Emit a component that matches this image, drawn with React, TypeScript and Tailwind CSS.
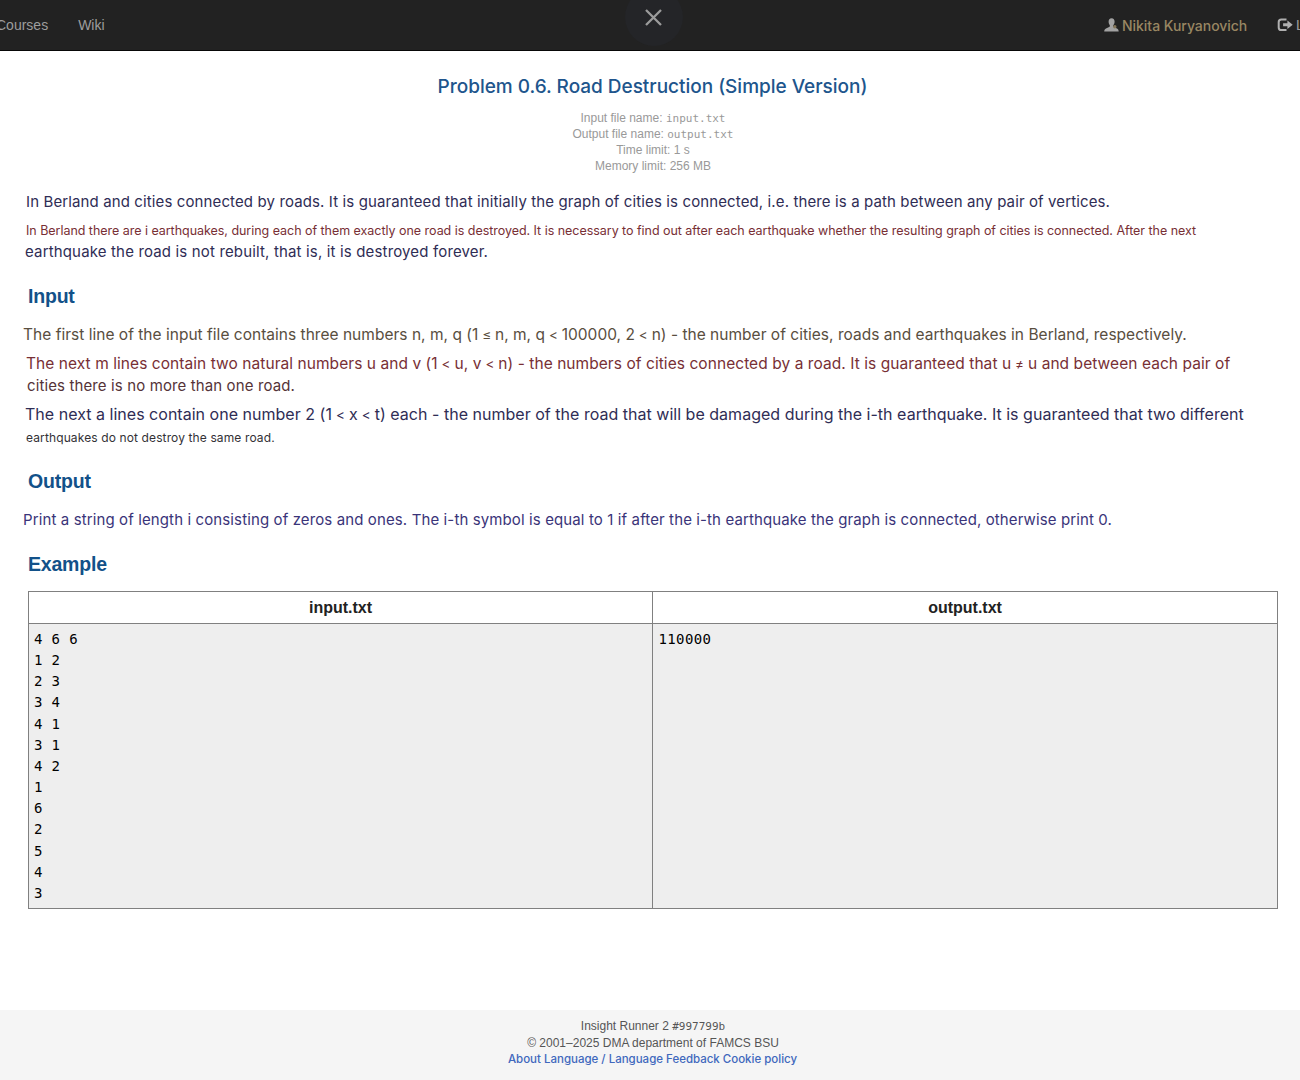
import type { ReactNode } from "react";

const inputLines = ["4 6 6", "1 2", "2 3", "3 4", "4 1", "3 1", "4 2", "1", "6", "2", "5", "4", "3"];

function Line({ className, children }: { className: string; children: ReactNode }) {
  return <p className={`h-[22px] leading-[22px] whitespace-nowrap font-['Inter',sans-serif] ${className}`}>{children}</p>;
}

function Heading({ className, children }: { className: string; children: ReactNode }) {
  return <h2 className={`h-6 pl-[28px] text-[19.5px] leading-6 font-bold tracking-[-0.2px] text-[#125189] ${className}`}>{children}</h2>;
}

function Op({ children }: { children: ReactNode }) {
  return <span className="-mx-[0.5px] text-[13.5px] leading-none">{children}</span>;
}

function UserIcon() {
  return (
    <svg className="-mt-px mr-[3px] h-[14px] w-[15px] shrink-0" viewBox="0 0 15 14">
      <path
        fill="#a2a2a2"
        d="M7.6.2C5.6.2 4.5 1.700 4.600 3.800c0 1.500.6 2.700 1.200 3.400.2.9 0 1.500-.7 1.900L2 10.500c-1 .5-1.600 1.300-1.800 2.900h14.500c-.2-1.600-.7-2.400-1.700-2.900L10 9.100c-.8-.4-.9-1-.7-1.900.7-.8 1.300-1.900 1.300-3.400C10.700 1.700 9.600.2 7.600.2Z"
      />
      <circle cx="10.800" cy="8.800" r="1.700" fill="#85775a" />
    </svg>
  );
}

function LogoutIcon() {
  return (
    <svg className="-mt-px h-[14px] w-4 shrink-0" viewBox="0 0 16 14">
      <path d="M9.500 1.500H4.300A2.600 2.600 0 0 0 1.700 4.100v5.300A2.600 2.600 0 0 0 4.300 12h5.200" fill="none" stroke="#b0b0b0" strokeWidth="2" />
      <path d="M6.100 5.300h4.300V2.500l5.300 4.300-5.300 4.300V8.300H6.100Z" fill="#b0b0b0" />
    </svg>
  );
}

export default function App() {
  return (
    <div className="flex h-[1080px] w-[1300px] flex-col overflow-hidden bg-white font-['Liberation_Sans',Arial,sans-serif]">
      <header className="relative flex h-[51px] shrink-0 items-center justify-between overflow-hidden border-b border-[#080808] bg-[#222222] text-[14px] text-[#9d9d9d]">
        <nav className="flex gap-[30px]">
          <span className="-ml-[4px]">Courses</span>
          <span>Wiki</span>
        </nav>
        <div className="absolute -top-[12px] left-[625px] flex size-[58px] items-center justify-center rounded-full bg-[#242528]">
          <svg className="size-[18px]" viewBox="0 0 18 18">
            <path d="M1 2l15 15M16 2l-15 15" stroke="#9b9b9b" strokeWidth="2.300" />
          </svg>
        </div>
        <div className="flex w-[196px] shrink-0 items-center whitespace-nowrap">
          <UserIcon />
          <span className="w-[155px] shrink-0 pt-[2px] font-['Inter',sans-serif] text-[14px] leading-5 font-medium tracking-[-0.03px] text-[#998762]">
            Nikita Kuryanovich
          </span>
          <LogoutIcon />
          <span className="ml-[3px]">Logout</span>
        </div>
      </header>

      <main className="flex grow flex-col">
        <h1 className="mt-[21px] h-[30px] pl-[5px] text-center font-['Inter',sans-serif] text-[19px] leading-[30px] font-medium tracking-[-0.02px] text-[#20558c]">
          Problem 0.6. Road Destruction (Simple Version)
        </h1>
        <div className="mt-[8px] pl-[6px] text-center text-[12px] leading-4 text-[#999999]">
          <div>
            Input file name: <code className="font-['DejaVu_Sans_Mono',monospace] text-[11px] leading-none">input.txt</code>
          </div>
          <div>
            Output file name: <code className="font-['DejaVu_Sans_Mono',monospace] text-[11px] leading-none">output.txt</code>
          </div>
          <div>Time limit: 1 s</div>
          <div>Memory limit: 256 MB</div>
        </div>

        <Line className="mt-[17px] pl-[26px] text-[15px] tracking-[0.119px] text-[#2f2d55]">
          In Berland and cities connected by roads. It is guaranteed that initially the graph of cities is connected, i.e. there is a path between any pair of vertices.
        </Line>
        <Line className="mt-[7px] pl-[26px] text-[12.5px] tracking-[-0.034px] text-[#782f35]">
          In Berland there are i earthquakes, during each of them exactly one road is destroyed. It is necessary to find out after each earthquake whether the resulting graph of cities is connected. After the next
        </Line>
        <Line className="-mt-px pl-[25px] text-[15px] tracking-[0.157px] text-[#2f2d55]">
          earthquake the road is not rebuilt, that is, it is destroyed forever.
        </Line>

        <Heading className="mt-[21px]">Input</Heading>
        <Line className="mt-[16px] pl-[23px] text-[15.5px] tracking-[0.018px] text-[#594e40]">
          The first line of the input file contains three numbers n, m, q (1 <Op>≤</Op> n, m, q <Op>&lt;</Op> 100000, 2 <Op>&lt;</Op> n) - the number of cities, roads and earthquakes in Berland, respectively.
        </Line>
        <Line className="mt-[7px] pl-[26px] text-[15.5px] tracking-[0.060px] text-[#782f35]">
          The next m lines contain two natural numbers u and v (1 <Op>&lt;</Op> u, v <Op>&lt;</Op> n) - the numbers of cities connected by a road. It is guaranteed that u <Op>≠</Op> u and between each pair of
        </Line>
        <Line className="pl-[27px] text-[15px] tracking-[0.12px] text-[#553338]">
          cities there is no more than one road.
        </Line>
        <Line className="mt-[6px] pl-[25px] text-[16px] tracking-[0.020px] text-[#2f2d55]">
          The next a lines contain one number 2 (1 <Op>&lt;</Op> x <Op>&lt;</Op> t) each - the number of the road that will be damaged during the i-th earthquake. It is guaranteed that two different
        </Line>
        <Line className="mt-[2px] pl-[26px] text-[12px] tracking-[0.12px] text-[#333136]">
          earthquakes do not destroy the same road.
        </Line>

        <Heading className="mt-[20px]">Output</Heading>
        <Line className="mt-[16px] pl-[23px] text-[15px] tracking-[0.117px] text-[#3a3479]">
          Print a string of length i consisting of zeros and ones. The i-th symbol is equal to 1 if after the i-th earthquake the graph is connected, otherwise print 0.
        </Line>

        <Heading className="mt-[21px]">Example</Heading>
        <div className="mt-[15px] ml-[28px] grid h-[318px] w-[1250px] grid-cols-[624px_1fr] grid-rows-[32px_1fr] border border-[#808080] text-[#222222]">
          <div className="border-r border-b border-[#808080] text-center text-[16px] leading-[31px] font-bold">input.txt</div>
          <div className="border-b border-[#808080] text-center text-[16px] leading-[31px] font-bold">output.txt</div>
          <pre className="border-r border-[#808080] bg-[#eeeeee] pt-[5px] pl-[5px] font-['DejaVu_Sans_Mono',monospace] text-[14px] leading-[21.150px] tracking-[0.370px] text-black">
            {inputLines.join("\n")}
          </pre>
          <pre className="bg-[#eeeeee] pt-[5px] pl-[5.500px] font-['DejaVu_Sans_Mono',monospace] text-[14px] leading-[21.150px] tracking-[0.370px] text-black">
            110000
          </pre>
        </div>
      </main>

      <footer className="h-[70px] shrink-0 bg-[#f5f5f5] pt-[8px] pl-[6px] text-center text-[12px] leading-[17px] text-[#555555]">
        <div className="h-[17px]">
          Insight Runner 2 <span className="font-['DejaVu_Sans_Mono',monospace] text-[11px] leading-none">#997799b</span>
        </div>
        <div className="h-[16px]">© 2001–2025 DMA department of FAMCS BSU</div>
        <div className="-ml-px font-['Inter',sans-serif] text-[11.5px] font-medium tracking-[-0.010px] text-[#4068bd]">
          About Language / Language Feedback Cookie policy
        </div>
      </footer>
    </div>
  );
}
